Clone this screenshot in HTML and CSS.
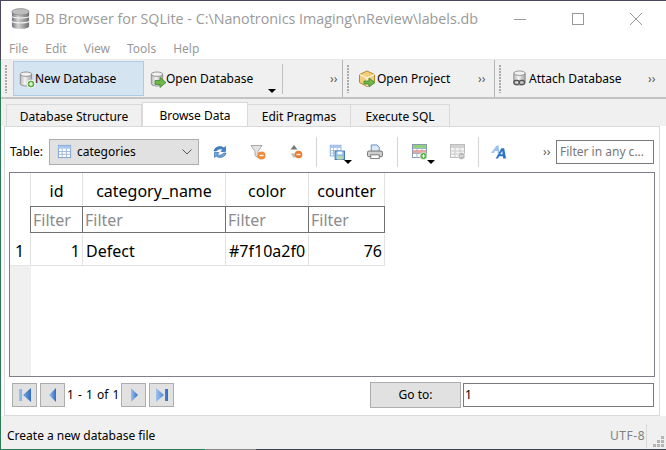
FILE: index.html
```html
<!DOCTYPE html>
<html lang="en">
<head>
<meta charset="utf-8">
<title>DB Browser for SQLite</title>
<link rel="stylesheet" href="styles.css">
</head>
<body>
<svg class="defs" width="0" height="0" aria-hidden="true">
  <defs>
    <linearGradient id="cyl" x1="0" x2="1" y1="0" y2="0"><stop offset="0" stop-color="#b8b8b8"/><stop offset=".4" stop-color="#f4f4f4"/><stop offset="1" stop-color="#a5a5a5"/></linearGradient>
    <linearGradient id="nav" x1="0" x2="1" y1="0" y2="0"><stop offset="0" stop-color="#9fc3ee"/><stop offset="1" stop-color="#2e6cc4"/></linearGradient>
    <symbol id="db" viewBox="0 0 16 18"><path d="M1.500 3.500v11c0 1.400 2.900 2.500 6.500 2.500s6.500-1.100 6.500-2.500v-11z" fill="url(#cyl)" stroke="#8a8a8a"/><ellipse cx="8" cy="3.500" rx="6.500" ry="2.500" fill="#f2f2f2" stroke="#8a8a8a"/></symbol>
    <symbol id="grid" viewBox="0 0 16 16"><rect x="1.500" y="1.500" width="13" height="13" fill="#fff" stroke="#7ba1d6"/><path d="M1.500 2h13v3h-13z" fill="#a9c6ec"/><path d="M2 8h12M2 11h12M5.500 5v9M10 5v9" stroke="#9db8dd" fill="none"/></symbol>
  </defs>
</svg>
<div class="titlebar">
  <svg class="appicon" viewBox="0 0 22 22"><defs><linearGradient id="a" x1="0" x2="1"><stop offset="0" stop-color="#777"/><stop offset=".35" stop-color="#d2d2d2"/><stop offset="1" stop-color="#6f6f6f"/></linearGradient></defs><path d="M2 4v15c0 1.500 4 2.800 9 2.800s9-1.300 9-2.800V4z" fill="url(#a)"/><path d="M2 9c1 2 17 2 18 0M2 14c1 2 17 2 18 0" stroke="#eee" stroke-width="1.300" fill="none"/><ellipse cx="11" cy="4" rx="9" ry="3.400" fill="#bdbdbd" stroke="#777" stroke-width=".6"/></svg>
  <span class="title">DB Browser for SQLite - C:\Nanotronics Imaging\nReview\labels.db</span>
  <div class="winbtns">
    <svg viewBox="0 0 12 12"><path d="M0 6.500h12" stroke="#999" fill="none"/></svg>
    <svg viewBox="0 0 12 12"><rect x=".5" y=".5" width="11" height="11" stroke="#999" fill="none"/></svg>
    <svg viewBox="0 0 12 12"><path d="M0 0l12 12M12 0L0 12" stroke="#999" fill="none"/></svg>
  </div>
</div>
<nav class="menubar"><span>File</span><span>Edit</span><span>View</span><span>Tools</span><span>Help</span></nav>
<div class="toolbar">
  <div class="tb tb1">
    <i class="grip"></i>
    <div class="tool hot">
      <svg class="ticon" viewBox="0 0 17 18"><use href="#db" width="14" height="16" y="1"/><circle cx="12" cy="14" r="4" fill="#5fb04a" stroke="#fff"/><path d="M10 14h4M12 12v4" stroke="#fff" stroke-width="1.200"/></svg>
      <span>New Database</span>
    </div>
    <div class="tool open">
      <svg class="ticon" viewBox="0 0 17 18"><use href="#db" width="14" height="16" y="1"/><path d="M5 10.500h5V7.500l6 5-6 5v-3H5z" fill="#6fb64b" stroke="#3f8a2d" stroke-width=".8"/></svg>
      <span>Open Database</span>
      <b class="drop"></b>
    </div>
    <span class="more m1">››</span>
  </div>
  <div class="tb tb2">
    <i class="grip"></i>
    <svg class="ticon" viewBox="0 0 18 18"><path d="M9 1l7.500 3.500v8L9 16.500 1.500 12.500v-8z" fill="#f3cf7d" stroke="#b98a2b"/><path d="M1.500 4.500L9 8l7.500-3.500M9 8v8" fill="none" stroke="#fff"/><path d="M6 11h5V8l6 4.500-6 4.500v-3H6z" fill="#6fb64b" stroke="#3f8a2d" stroke-width=".8"/></svg>
    <span>Open Project</span>
    <span class="more m2">››</span>
  </div>
  <div class="tb tb3">
    <i class="grip"></i>
    <svg class="ticon" viewBox="0 0 16 18"><use href="#db" width="14" height="16" x="1"/><rect x="2.500" y="10.500" width="5" height="4" rx="1.500" fill="none" stroke="#555" stroke-width="1.300"/><rect x="8" y="10.500" width="5" height="4" rx="1.500" fill="none" stroke="#555" stroke-width="1.300"/></svg>
    <span>Attach Database</span>
    <span class="more m3">››</span>
  </div>
</div>
<div class="tabs">
  <span class="tab t1">Database Structure</span>
  <span class="tab active">Browse Data</span>
  <span class="tab t3">Edit Pragmas</span>
  <span class="tab t4">Execute SQL</span>
</div>
<main class="panel">
  <div class="filterbar">
    <label class="tlabel">Table:</label>
    <div class="combo">
      <svg class="cicon" viewBox="0 0 16 16"><use href="#grid"/></svg>
      <span>categories</span>
      <svg class="chev" viewBox="0 0 10 6"><path d="M.5 .5L5 5l4.500-4.500" fill="none" stroke="#555"/></svg>
    </div>
    <svg class="ic refresh" viewBox="0 0 16 16"><path d="M2 7a6 5.500 0 0 1 10-3l1.500-1.500V7.500H9l1.700-1.900A4 3.500 0 0 0 4.500 7z" fill="#3f83c9" stroke="#2a5f9e" stroke-width=".6"/><path d="M14 9a6 5.500 0 0 1-10 3l-1.500 1.500V8.500H7L5.300 10.400A4 3.500 0 0 0 11.500 9z" fill="#6fa7de" stroke="#2a5f9e" stroke-width=".6"/></svg>
    <svg class="ic clearf" viewBox="0 0 16 16"><path d="M1 1.500h11L8 7.500v6l-3-2V7.500z" fill="#e3e3e3" stroke="#aaa"/><circle cx="11.500" cy="11.500" r="4" fill="#ef8b3c"/><path d="M9.500 11.500h4" stroke="#fff" stroke-width="1.300"/></svg>
    <svg class="ic sort" viewBox="0 0 14 16"><path d="M5 1l3.500 4.500h-7z" fill="#777"/><path d="M5 14l3.500-4.500h-7z" fill="#bbb"/><circle cx="9.500" cy="10.500" r="3.800" fill="#ef7b32"/><path d="M7.500 10.500h4" stroke="#fff" stroke-width="1.300"/></svg>
    <i class="vsep s1"></i>
    <div class="icd d1">
      <svg class="ic" viewBox="0 0 17 17"><use href="#grid" width="14" height="14"/><rect x="6.500" y="7.500" width="10" height="9" fill="#8fbfe8" stroke="#3f73b5"/><rect x="9" y="8" width="5" height="3" fill="#fff"/><rect x="8.500" y="13" width="6" height="3.500" fill="#b9dca0"/></svg>
      <b class="drop"></b>
    </div>
    <svg class="ic print" viewBox="0 0 17 17"><path d="M4.500 1h6l2.500 2.500V8h-8.500z" fill="#dce8f6" stroke="#5a8cc6"/><rect x=".5" y="7.500" width="16" height="6" rx="1.500" fill="#cfcfcf" stroke="#6d6d6d"/><rect x="4" y="11.500" width="9" height="4" fill="#fff" stroke="#777"/></svg>
    <i class="vsep s2"></i>
    <div class="icd d2">
      <svg class="ic" viewBox="0 0 16 16"><rect x=".5" y=".5" width="14" height="13" fill="#fff" stroke="#8a9aae"/><rect x="1" y="1" width="13" height="3" fill="#8fd17e"/><rect x="1" y="6" width="13" height="3" fill="#f3a4a0"/><path d="M1 4.500h13M1 9.500h13M5 4v10M10 4v10" stroke="#a7b6c6"/><circle cx="11.500" cy="12" r="3.500" fill="#59ad45" stroke="#fff" stroke-width=".6"/><path d="M9.700 12h3.600M11.500 10.200v3.600" stroke="#fff"/></svg>
      <b class="drop"></b>
    </div>
    <svg class="ic del" viewBox="0 0 16 16"><rect x=".5" y=".5" width="14" height="13" fill="#f4f4f4" stroke="#bdbdbd"/><rect x="1" y="1" width="13" height="3" fill="#d2d2d2"/><path d="M1 7h13M1 10h13M5 4v10M10 4v10" stroke="#c9c9c9"/><circle cx="11.500" cy="12" r="3.500" fill="#b5b5b5" stroke="#fff" stroke-width=".6"/><path d="M9.700 12h3.600" stroke="#fff"/></svg>
    <i class="vsep s3"></i>
    <svg class="ic font" viewBox="0 0 17 16"><path d="M0 9L6 1h2l1 8H7V7H4L3 9z" fill="#9cc3ee"/><path d="M5 15L11 4h3l2 11h-3l-.4-2.500H8.500L7.500 15z" fill="#2d74c9"/><path d="M9.800 10.300h2.500L12 7z" fill="#fff"/></svg>
    <span class="more m4">››</span>
    <div class="filterall">Filter in any c...</div>
  </div>
  <div class="tablebox">
    <div class="rowhead">
      <div class="rh-top"></div>
      <div class="rh-num">1</div>
    </div>
    <div class="grid">
      <div class="hd">id</div><div class="hd">category_name</div><div class="hd">color</div><div class="hd">counter</div>
      <div class="flt">Filter</div><div class="flt">Filter</div><div class="flt">Filter</div><div class="flt">Filter</div>
      <div class="cell num">1</div><div class="cell">Defect</div><div class="cell">#7f10a2f0</div><div class="cell num">76</div>
    </div>
  </div>
  <div class="pager">
    <div class="pbtn"><svg viewBox="0 0 12 14"><path d="M0 1h3v12H0z M12 0v14L4 7z" fill="url(#nav)"/></svg></div>
    <div class="pbtn"><svg viewBox="0 0 12 14"><path d="M9 0v14L2 7z" fill="url(#nav)"/></svg></div>
    <span class="pcount">1 - 1 of 1</span>
    <div class="pbtn"><svg viewBox="0 0 12 14"><path d="M3 0v14l7-7z" fill="url(#nav)"/></svg></div>
    <div class="pbtn"><svg viewBox="0 0 12 14"><path d="M0 0v14l8-7z M9 1h3v12H9z" fill="url(#nav)"/></svg></div>
    <div class="goto">Go to:</div>
    <div class="gotoinput">1</div>
  </div>
</main>
<footer class="status">
  <span class="msg">Create a new database file</span>
  <span class="enc">UTF-8</span>
  <i class="ssep"></i>
  <svg class="sizegrip" viewBox="0 0 12 12"><path d="M9 0h3v3H9zM5 4h3v3H5zM9 4h3v3H9zM1 8h3v3H1zM5 8h3v3H5zM9 8h3v3H9z" fill="#b5b5b5"/></svg>
</footer>
</body>
</html>
```
FILE: styles.css
```css
* { box-sizing: border-box; }
html, body { margin: 0; height: 100%; }
body {
  width: 666px; height: 450px; overflow: hidden;
  display: flex; flex-direction: column;
  padding: 1px 0 1px 1px;
  font: 12px/16px Tahoma, "Noto Sans", sans-serif;
  color: #000; background-color: #fff;
  background-image:
    linear-gradient(90deg, #2d7a58 205px, #8a8a8a 205px, #8a8a8a 256px, #3f4650 256px),
    linear-gradient(90deg, #4b4560, #4b4560),
    linear-gradient(180deg, #4b4560 60px, #2d7a58 60px);
  background-size: 100% 1px, 100% 1px, 1px 100%;
  background-position: left bottom, left top, left top;
  background-repeat: no-repeat;
}
.defs { position: absolute; }
.titlebar { height: 37px; flex: none; display: flex; align-items: center; padding-left: 9px; background: #fff; }
.appicon { width: 21px; height: 21px; margin-top: -2px; }
.title { margin-left: 4px; margin-top: -2px; font: 14.300px "Open Sans", sans-serif; color: #9a9a9a; white-space: nowrap; }
.winbtns { margin-left: auto; display: flex; align-items: center; gap: 46px; padding-right: 24px; margin-top: -2px; }
.winbtns svg { width: 12px; height: 12px; display: block; }
.menubar { height: 22px; flex: none; display: flex; gap: 17px; padding-left: 8px; align-items: center; color: #999; background: #fff; border-bottom: 1px solid #e9e9e9; }
.toolbar { height: 39px; flex: none; display: flex; background: #f0f0f0; border-bottom: 2px solid #c3c3c3; }
.tb { position: relative; display: flex; align-items: center; height: 37px; border-right: 1px solid #b5b5b5; }
.tb1 { width: 342px; }
.tb2 { width: 152px; }
.tb3 { flex: 1; border-right: 0; }
.grip { width: 2px; height: 28px; margin-left: 4px; flex: none; background: repeating-linear-gradient(180deg, #aaa 0 2px, transparent 2px 3px); }
.tool { display: flex; align-items: center; height: 35px; position: relative; }
.hot { width: 131px; margin-left: 6px; padding-left: 5px; background: #d5e4f1; border: 1px solid #a9cde9; }
.open { width: 139px; padding-left: 6px; border-right: 1px solid #c0c0c0; height: 30px; }
.ticon { width: 17px; height: 18px; flex: none; margin-right: 1px; }
.tool .ticon { margin-right: -1px; }
.tb2 .ticon { width: 18px; }
.drop { position: absolute; width: 0; height: 0; border: 4px solid transparent; border-top: 4px solid #000; border-bottom: 0; }
.open .drop { right: 6px; bottom: 1px; }
.more { position: absolute; color: #555; font-size: 12px; letter-spacing: 0; }
.m1 { left: 329px; }
.m2 { left: 135px; }
.m3 { left: 153px; }
.m4 { left: 534px; top: 17px; }
.tb2 .grip { margin-right: 9px; }
.tb3 .grip { margin-right: 10px; }
.tabs { height: 27px; flex: none; display: flex; align-items: flex-end; padding-left: 5px; background: #f0f0f0; }
.tab { height: 22px; border: 1px solid #d9d9d9; border-left: 0; border-bottom: 0; background: #f0f0f0; text-align: center; line-height: 23px; margin-bottom: 0; }
.t1 { width: 136px; border-left: 1px solid #d9d9d9; }
.t3 { width: 103px; }
.t4 { width: 99px; }
.active { width: 106px; height: 25px; background: #fff; border-left: 1px solid #d9d9d9; line-height: 25px; position: relative; top: 1px; }
.panel { position: relative; flex: none; height: 290px; margin: 0 6px 0 3px; background: #fff; border: 1px solid #d9d9d9; padding: 0 4px; display: flex; flex-direction: column; }
.filterbar { height: 45px; flex: none; display: flex; align-items: center; position: relative; padding-top: 4px; }
.tlabel { width: 40px; padding-left: 1px; margin-top: 1px; }
.combo { width: 150px; height: 26px; display: flex; align-items: center; padding: 0 6px 0 7px; background: #e1e1e1; border: 1px solid #adadad; }
.cicon { width: 15px; height: 15px; margin-right: 5px; }
.chev { width: 10px; height: 6px; margin-left: auto; }
.ic { width: 16px; height: 16px; display: block; flex: none; }
.refresh { margin-left: 13px; }
.clearf { margin-left: 22px; }
.sort { margin-left: 23px; width: 14px; }
.vsep { width: 1px; height: 30px; background: #d4d4d4; flex: none; }
.s1 { margin-left: 13px; }
.icd { position: relative; flex: none; }
.icd .drop { right: -7px; bottom: -4px; }
.d1 { margin-left: 12px; }
.print { margin-left: 22px; }
.s2 { margin-left: 14px; }
.d2 { margin-left: 14px; }
.del { margin-left: 22px; }
.s3 { margin-left: 12px; }
.font { margin-left: 12px; }
.filterall { position: absolute; right: 1px; top: 13px; width: 98px; height: 24px; border: 1px solid #7a7a7a; padding-left: 3px; line-height: 22px; color: #777; white-space: nowrap; }
.tablebox { height: 205px; flex: none; border: 1px solid #7f7f8a; display: flex; font-size: 16px; }
.rowhead { width: 21px; flex: none; background: #f0f0f0; }
.rh-top { height: 60px; background: #fff; }
.rh-num { height: 33px; background: #fff; border-bottom: 1px solid #e6e6e6; padding-left: 5px; line-height: 36px; }
.grid { display: grid; grid-template-columns: 52px 143px 83px 76px; grid-template-rows: 33px 27px 33px; align-content: start; justify-content: start; }
.hd { border-right: 1px solid #e2e2e2; border-left: 1px solid #e2e2e2; margin-left: -1px; text-align: center; line-height: 33px; padding-top: 2px; white-space: nowrap; }
.flt { border: 1px solid #707070; margin-left: -1px; padding-left: 2px; color: #8c8c8c; line-height: 27px; overflow: hidden; }
.cell { border: 0 solid #e2e2e2; border-width: 2px 1px 1px 1px; margin-left: -1px; padding: 0 3px; line-height: 33px; border-top-color: #fff; white-space: nowrap; }
.num { text-align: right; padding-right: 2px; }
.pager { display: flex; align-items: center; height: 30px; margin-top: 3px; padding-left: 3px; }
.pbtn { width: 25px; height: 24px; flex: none; display: flex; align-items: center; justify-content: center; background: #e1e1e1; border: 1px solid #adadad; margin-right: 3px; }
.pbtn svg { width: 12px; height: 14px; }
.pcount { width: 54px; margin-left: -1px; padding-left: 0; flex: none; white-space: nowrap; word-spacing: 1px; }
.goto { width: 91px; height: 26px; margin-left: 193px; flex: none; text-align: center; line-height: 24px; background: #e1e1e1; border: 1px solid #adadad; }
.gotoinput { width: 191px; height: 24px; margin-left: 2px; flex: none; border: 1px solid #7a7a7a; padding-left: 1px; line-height: 22px; }
.status { flex: 1; display: flex; align-items: center; padding: 6px 0 0 6px; background: #f0f0f0; color: #000; }
.enc { margin-left: auto; color: #808080; letter-spacing: .5px; }
.ssep { width: 1px; height: 24px; background: #d9d9d9; margin: 0 5px 0 1px; }
.sizegrip { width: 12px; height: 12px; align-self: flex-end; margin-right: 2px; margin-bottom: 1px; }
```
